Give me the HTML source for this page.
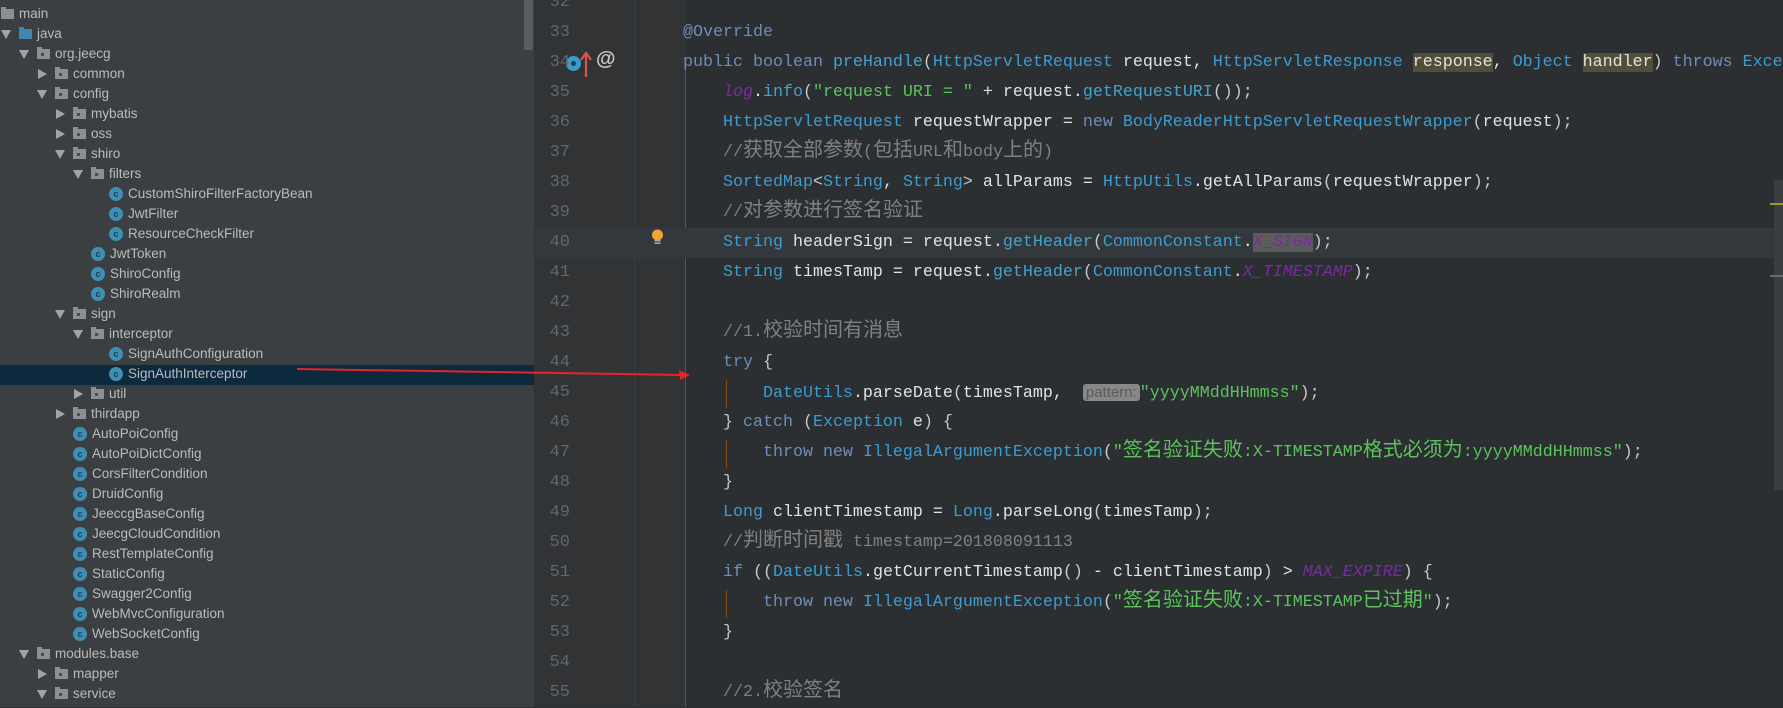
<!DOCTYPE html>
<html><head><meta charset="utf-8"><style>
*{margin:0;padding:0;box-sizing:border-box}
body{width:1783px;height:707px;overflow:hidden;background:#2b2f32;position:relative;font-family:"Liberation Sans","Noto Sans CJK SC",sans-serif}
#tree{position:absolute;left:0;top:0;width:534px;height:707px;background:#3c3f41}
.r{position:absolute;height:20px;line-height:20px;font-size:13.5px;color:#bbbbbb;white-space:nowrap}
.sel{position:absolute;left:0;top:365px;width:534px;height:20px;background:#0d293e}
.tri{position:absolute;width:0;height:0}
.td{border-left:5px solid transparent;border-right:5px solid transparent;border-top:9px solid #a0a4a8;top:6px}
.tr{border-top:5px solid transparent;border-bottom:5px solid transparent;border-left:9px solid #a0a4a8;top:5px}
.fo{position:absolute;top:5px;width:13px;height:10px;background:#8c9095}
.fo:before{content:"";position:absolute;left:0;top:-2px;width:5px;height:2px;background:#8c9095}
.fo:after{content:"";position:absolute;left:4px;top:4px;width:3px;height:3px;background:#4a4d50}
.fo.blue{background:#3f87b0}.fo.blue:before{background:#3f87b0}.fo.blue:after{display:none}
.fo.plain:after{display:none}
.cl{position:absolute;top:3px;width:14px;height:14px;border-radius:50%;background:#3d8fb5;color:#1d3c4c;font-size:9px;line-height:14px;text-align:center;font-weight:bold}
#gut{position:absolute;left:534px;top:0;width:151px;height:707px;background:#313335}
#sb{position:absolute;left:524px;top:0;width:9px;height:50px;background:#5a5d60;border-radius:2px}
.cur{position:absolute;left:534px;top:228px;width:1249px;height:30px;background:#33383c}
.ln{position:absolute;left:534px;width:40px;text-align:right;padding-right:4px;height:30px;line-height:30px;font-family:"Liberation Mono",monospace;font-size:17px;color:#60676d}
.c{position:absolute;left:683px;height:30px;line-height:30px;font-family:"Liberation Mono","Noto Sans CJK SC",monospace;font-size:16.66px;color:#e2e2e2;white-space:pre}
.z{font-family:"Noto Sans CJK SC",sans-serif;font-size:20px;line-height:20px}
.k{color:#6f8db8}.t{color:#3c9bd0}.m{color:#45a2cc}.cm{color:#808080}.s{color:#5cc35c}.p{color:#c8c8c8}
.cst{color:#7b2aa0;font-style:italic}.hl{background:#524f38}.hg{background:#5c5c5c}
.hint{background:#888;color:#5a5a5a;border-radius:3px;font-family:"Liberation Sans",sans-serif;font-size:15px;padding:0 3px}
.ig{position:absolute;width:1px;background:#8a4a12}
.fold{position:absolute;left:634px;top:0;width:1px;height:707px;background:#3a3e41}
</style></head><body>
<div id="tree">
<div id="sb"></div>
<div class="sel"></div>
</div>
<div id="gut"></div>
<div class="fold"></div>
<div class="cur"></div>
<div class="ig" style="left:685px;top:258px;height:449px"></div>
<div class="ig" style="left:685px;top:68px;height:160px"></div>
<div class="ig" style="left:726px;top:380px;height:28px"></div>
<div class="ig" style="left:726px;top:440px;height:28px"></div>
<div class="ig" style="left:726px;top:590px;height:28px"></div>
<div style="position:absolute;left:1774px;top:180px;width:9px;height:310px;background:#3a3e41"></div>
<div style="position:absolute;left:1770px;top:203px;width:13px;height:2px;background:#9a9a1a"></div>
<div style="position:absolute;left:1770px;top:275px;width:13px;height:2px;background:#6a6a6a"></div>

<div id="rows"></div>

<div style="position:absolute;left:566px;top:56px;width:15px;height:15px;border-radius:50%;background:#3d9ac4"></div>
<div style="position:absolute;left:571px;top:61px;width:5px;height:5px;border-radius:50%;background:#1f3e50"></div>
<svg style="position:absolute;left:580px;top:50px" width="12" height="28"><path d="M6 27V5M1 10L6 3L11 10" stroke="#d9544c" stroke-width="2.2" fill="none"/></svg>
<div style="position:absolute;left:596px;top:48px;font-family:'Liberation Sans',sans-serif;font-size:20px;color:#c8c8c8;font-weight:bold">@</div>
<svg style="position:absolute;left:651px;top:229px" width="13" height="17"><circle cx="6.5" cy="6" r="5.5" fill="#f0a732"/><rect x="3.5" y="11" width="6" height="1.5" fill="#aaa"/><rect x="3.5" y="13.5" width="6" height="1.5" fill="#aaa"/></svg>

<script>
const tree=[
[0,'main','fp'],[1,'java','db'],[2,'org.jeecg','d'],[3,'common','r'],[3,'config','d'],[4,'mybatis','r'],[4,'oss','r'],[4,'shiro','d'],[5,'filters','d'],
[6,'CustomShiroFilterFactoryBean','c'],[6,'JwtFilter','c'],[6,'ResourceCheckFilter','c'],[5,'JwtToken','c'],[5,'ShiroConfig','c'],[5,'ShiroRealm','c'],
[4,'sign','d'],[5,'interceptor','d'],[6,'SignAuthConfiguration','c'],[6,'SignAuthInterceptor','c'],[5,'util','r'],[4,'thirdapp','r'],
[4,'AutoPoiConfig','c'],[4,'AutoPoiDictConfig','c'],[4,'CorsFilterCondition','c'],[4,'DruidConfig','c'],[4,'JeeccgBaseConfig','c'],[4,'JeecgCloudCondition','c'],
[4,'RestTemplateConfig','c'],[4,'StaticConfig','c'],[4,'Swagger2Config','c'],[4,'WebMvcConfiguration','c'],[4,'WebSocketConfig','c'],
[2,'modules.base','d'],[3,'mapper','r'],[3,'service','d']];
let h='';
tree.forEach((e,i)=>{const [lv,name,ty]=e;const x=19+18*lv;const y=4+20*i;
 let ic='';
 if(ty=='c'){ic=`<div class="cl" style="left:${x-18}px">c</div>`;}
 else{ic=`<div class="fo${ty=='fp'?' plain':''}${ty=='db'?' blue':''}" style="left:${x-18}px"></div>`;
  if(ty=='d'||ty=='db')ic+=`<div class="tri td" style="left:${x-36}px"></div>`;
  if(ty=='r')ic+=`<div class="tri tr" style="left:${x-35}px"></div>`;}
 const tx=ty=='c'?x+1:x;
 h+=`<div class="r" style="left:0;top:${y}px;width:534px">${ic}<span style="position:absolute;left:${tx}px">${name}</span></div>`;});
document.getElementById('rows').innerHTML=h;
</script>

<div class="ln" style="top:-12px">32</div>
<div class="ln" style="top:18px">33</div>
<div class="ln" style="top:48px">34</div>
<div class="ln" style="top:78px">35</div>
<div class="ln" style="top:108px">36</div>
<div class="ln" style="top:138px">37</div>
<div class="ln" style="top:168px">38</div>
<div class="ln" style="top:198px">39</div>
<div class="ln" style="top:228px">40</div>
<div class="ln" style="top:258px">41</div>
<div class="ln" style="top:288px">42</div>
<div class="ln" style="top:318px">43</div>
<div class="ln" style="top:348px">44</div>
<div class="ln" style="top:378px">45</div>
<div class="ln" style="top:408px">46</div>
<div class="ln" style="top:438px">47</div>
<div class="ln" style="top:468px">48</div>
<div class="ln" style="top:498px">49</div>
<div class="ln" style="top:528px">50</div>
<div class="ln" style="top:558px">51</div>
<div class="ln" style="top:588px">52</div>
<div class="ln" style="top:618px">53</div>
<div class="ln" style="top:648px">54</div>
<div class="ln" style="top:678px">55</div>

<div class="c" style="top:18px"><span class="k">@Override</span></div>
<div class="c" style="top:48px"><span class="k">public boolean </span><span class="m">preHandle</span><span class="p">(</span><span class="t">HttpServletRequest</span> request, <span class="t">HttpServletResponse</span> <span class="hl">response</span>, <span class="t">Object</span> <span class="hl">handler</span><span class="p">)</span> <span class="k">throws</span> <span class="t">Exception</span> {</div>
<div class="c" style="top:78px">    <span class="cst">log</span>.<span class="m">info</span><span class="p">(</span><span class="s">"request URI = "</span> + request.<span class="m">getRequestURI</span><span class="p">());</span></div>
<div class="c" style="top:108px">    <span class="t">HttpServletRequest</span> requestWrapper = <span class="k">new</span> <span class="t">BodyReaderHttpServletRequestWrapper</span><span class="p">(</span>request<span class="p">);</span></div>
<div class="c" style="top:138px">    <span class="cm">//<span class="z">获取全部参数</span>(<span class="z">包括</span>URL<span class="z">和</span>body<span class="z">上的</span>)</span></div>
<div class="c" style="top:168px">    <span class="t">SortedMap</span><span class="p">&lt;</span><span class="t">String</span>, <span class="t">String</span><span class="p">&gt;</span> allParams = <span class="t">HttpUtils</span>.getAllParams<span class="p">(</span>requestWrapper<span class="p">);</span></div>
<div class="c" style="top:198px">    <span class="cm">//<span class="z">对参数进行签名验证</span></span></div>
<div class="c" style="top:228px">    <span class="t">String</span> headerSign = request.<span class="m">getHeader</span><span class="p">(</span><span class="t">CommonConstant</span>.<span class="cst hg">X_SIGN</span><span class="p">);</span></div>
<div class="c" style="top:258px">    <span class="t">String</span> timesTamp = request.<span class="m">getHeader</span><span class="p">(</span><span class="t">CommonConstant</span>.<span class="cst">X_TIMESTAMP</span><span class="p">);</span></div>
<div class="c" style="top:318px">    <span class="cm">//1.<span class="z">校验时间有消息</span></span></div>
<div class="c" style="top:348px">    <span class="k">try</span> <span class="p">{</span></div>
<div class="c" style="top:378px">        <span class="t">DateUtils</span>.parseDate<span class="p">(</span>timesTamp,  <span class="hint">pattern:</span><span class="s">"yyyyMMddHHmmss"</span><span class="p">);</span></div>
<div class="c" style="top:408px">    <span class="p">}</span> <span class="k">catch</span> <span class="p">(</span><span class="t">Exception</span> e<span class="p">) {</span></div>
<div class="c" style="top:438px">        <span class="k">throw new</span> <span class="t">IllegalArgumentException</span><span class="p">(</span><span class="s">"<span class="z">签名验证失败</span>:X-TIMESTAMP<span class="z">格式必须为</span>:yyyyMMddHHmmss"</span><span class="p">);</span></div>
<div class="c" style="top:468px">    <span class="p">}</span></div>
<div class="c" style="top:498px">    <span class="t">Long</span> clientTimestamp = <span class="t">Long</span>.parseLong<span class="p">(</span>timesTamp<span class="p">);</span></div>
<div class="c" style="top:528px">    <span class="cm">//<span class="z">判断时间戳</span> timestamp=201808091113</span></div>
<div class="c" style="top:558px">    <span class="k">if</span> <span class="p">((</span><span class="t">DateUtils</span>.getCurrentTimestamp<span class="p">()</span> - clientTimestamp<span class="p">)</span> &gt; <span class="cst">MAX_EXPIRE</span><span class="p">) {</span></div>
<div class="c" style="top:588px">        <span class="k">throw new</span> <span class="t">IllegalArgumentException</span><span class="p">(</span><span class="s">"<span class="z">签名验证失败</span>:X-TIMESTAMP<span class="z">已过期</span>"</span><span class="p">);</span></div>
<div class="c" style="top:618px">    <span class="p">}</span></div>
<div class="c" style="top:678px">    <span class="cm">//2.<span class="z">校验签名</span></span></div>

<svg style="position:absolute;left:0;top:0" width="1783" height="707"><path d="M297 369L684 375" stroke="#e8222a" stroke-width="2"/><path d="M690 375L679 370L680 380Z" fill="#e8222a"/></svg>
</body></html>
